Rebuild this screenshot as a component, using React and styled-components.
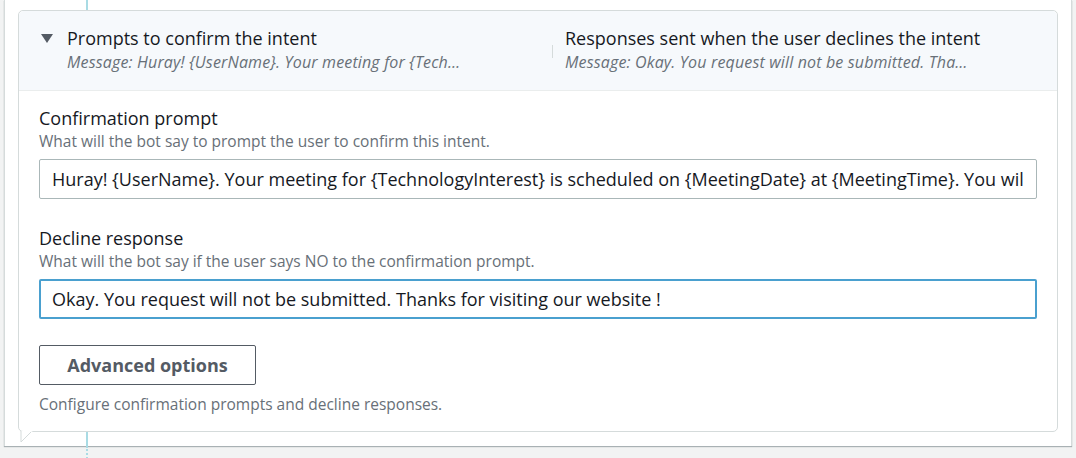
import React from "react";
import styled, { createGlobalStyle } from "styled-components";

const GlobalStyle = createGlobalStyle`
  html, body {
    margin: 0;
    padding: 0;
    background: #f2f3f3;
    font-family: "Open Sans", "Noto Sans", Arial, sans-serif;
    color: #16191f;
  }
`;

const App = () => {
  return (
    <>
      <GlobalStyle />
      <Panel>
        <Connector $height={10} />
        <Card>
          <Header>
            <HeaderColumn $width={511}>
              <Caret />
              <HeaderText>
                <HeaderTitle>Prompts to confirm the intent</HeaderTitle>
                <HeaderSub>
                  Message: Huray! {"{UserName}"}. Your meeting for {"{Tech…"}
                </HeaderSub>
              </HeaderText>
            </HeaderColumn>
            <Divider />
            <HeaderColumn>
              <HeaderText>
                <HeaderTitle>Responses sent when the user declines the intent</HeaderTitle>
                <HeaderSub>
                  Message: Okay. You request will not be submitted. Tha…
                </HeaderSub>
              </HeaderText>
            </HeaderColumn>
          </Header>
          <Body>
            <Field>
              <Label>Confirmation prompt</Label>
              <Description>What will the bot say to prompt the user to confirm this intent.</Description>
              <Input
                readOnly
                value="Huray! {UserName}. Your meeting for {TechnologyInterest} is scheduled on {MeetingDate} at {MeetingTime}. You will receive a confirmation shortly."
              />
            </Field>
            <Field $gap={28}>
              <Label>Decline response</Label>
              <Description>What will the bot say if the user says NO to the confirmation prompt.</Description>
              <Input
                $focused
                readOnly
                value="Okay. You request will not be submitted. Thanks for visiting our website !"
              />
            </Field>
            <Button>Advanced options</Button>
            <Caption>Configure confirmation prompts and decline responses.</Caption>
          </Body>
          <Tail width="14" height="12" viewBox="0 0 14 12">
            <polygon points="2,0 2,11 12,1 14,0" fill="#fff" />
            <polyline points="2,0 2,11 12,1" fill="none" stroke="#d5dbdb" strokeWidth="1" />
          </Tail>
        </Card>
        <Connector $height={14} />
      </Panel>
      <Connector $height={20} $dotted />
    </>
  );
};

export default App;

const Panel = styled.div`
  margin-left: 4px;
  width: 1068px;
  background: #fff;
  border-left: 1px solid #d5dbdb;
  border-right: 1px solid #d5dbdb;
  box-shadow: 0 1px 1px 0 rgba(0, 28, 36, 0.3);
  padding: 0 13px;
  box-sizing: border-box;
`;

const Connector = styled.div`
  width: 0;
  height: ${(p) => p.$height}px;
  margin-left: ${(p) => (p.$dotted ? 86 : 68)}px;
  border-left: 2px ${(p) => (p.$dotted ? "dotted" : "solid")} #a9dbe4;
`;

const Card = styled.div`
  position: relative;
  border: 1px solid #d5dbdb;
  border-radius: 5px;
  background: #fff;
`;

const Tail = styled.svg`
  position: absolute;
  left: 0;
  bottom: -12px;
`;

const Header = styled.div`
  display: flex;
  align-items: center;
  padding: 16px 20px 19px 22px;
  background: #f6f9fc;
  border-bottom: 1px solid #eaeded;
  border-radius: 5px 5px 0 0;
`;

const HeaderColumn = styled.div`
  display: flex;
  align-items: flex-start;
  ${(p) => (p.$width ? `width: ${p.$width}px;` : "flex: 1;")}
  min-width: 0;
`;

const Caret = styled.span`
  width: 0;
  height: 0;
  margin: 7px 14px 0 0;
  border-left: 6px solid transparent;
  border-right: 6px solid transparent;
  border-top: 9px solid #545b64;
`;

const HeaderText = styled.div`
  display: flex;
  flex-direction: column;
  gap: 4px;
  min-width: 0;
`;

const HeaderTitle = styled.div`
  font-size: 18px;
  line-height: 22px;
  color: #16191f;
  white-space: nowrap;
`;

const HeaderSub = styled.div`
  font-size: 16px;
  letter-spacing: 0.15px;
  line-height: 18px;
  font-style: italic;
  color: #687078;
  white-space: nowrap;
`;

const Divider = styled.div`
  width: 1px;
  height: 13px;
  margin: 18px 12px 0 0;
  background: #d5dbdb;
  align-self: flex-start;
`;

const Body = styled.div`
  padding: 16px 20px 17px 20px;
  display: flex;
  flex-direction: column;
  align-items: flex-start;
`;

const Field = styled.div`
  display: flex;
  flex-direction: column;
  width: 100%;
  margin-top: ${(p) => p.$gap || 0}px;
`;

const Label = styled.div`
  font-size: 18px;
  line-height: 22px;
  color: #16191f;
`;

const Description = styled.div`
  font-size: 15.5px;
  line-height: 19px;
  margin-top: 3px;
  color: #687078;
`;

const Input = styled.input`
  margin-top: 8px;
  height: 40px;
  box-sizing: border-box;
  width: 100%;
  padding: 0 12px;
  font-family: inherit;
  font-size: 18px;
  color: #16191f;
  background: #fff;
  border-radius: 2px;
  outline: none;
  border: ${(p) => (p.$focused ? "2px solid #4aa0cf" : "1px solid #aab7b8")};
  padding-left: ${(p) => (p.$focused ? 11 : 12)}px;
`;

const Button = styled.button`
  margin-top: 26px;
  height: 40px;
  width: 217px;
  box-sizing: border-box;
  font-family: inherit;
  font-size: 18px;
  font-weight: 700;
  color: #545b64;
  background: #fff;
  border: 1px solid #545b64;
  border-radius: 2px;
`;

const Caption = styled.div`
  margin-top: 10px;
  font-size: 15.5px;
  line-height: 19px;
  color: #687078;
`;
